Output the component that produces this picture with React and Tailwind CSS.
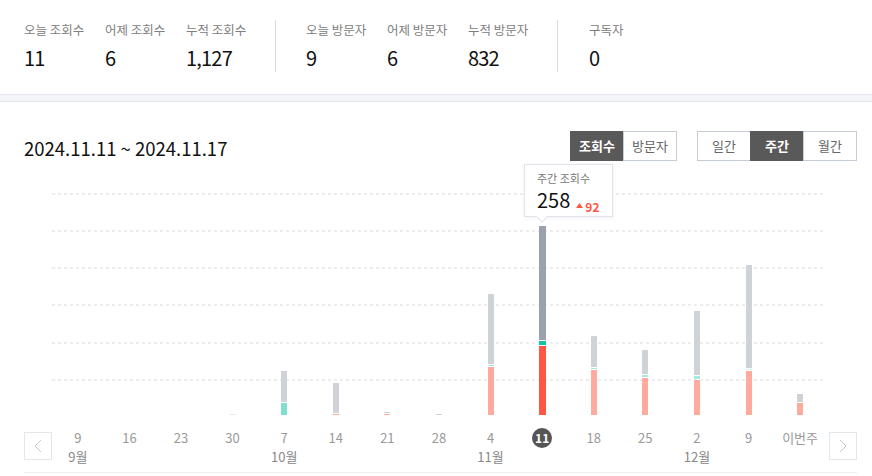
const font = { fontFamily: '"Noto Sans CJK KR", "Noto Sans", sans-serif' };

const viewStats = [
  { label: "오늘 조회수", value: "11" },
  { label: "어제 조회수", value: "6" },
  { label: "누적 조회수", value: "1,127" },
];
const visitStats = [
  { label: "오늘 방문자", value: "9" },
  { label: "어제 방문자", value: "6" },
  { label: "누적 방문자", value: "832" },
];

// weekly bars, segment heights in px: gray (top), teal, red (bottom)
const weeks = [
  { day: "9", month: "9월" },
  { day: "16" },
  { day: "23" },
  { day: "30", gray: 1, faint: true },
  { day: "7", month: "10월", gray: 31, teal: 12, tealColor: "bg-[#80dfcf]" },
  { day: "14", gray: 30, red: 1 },
  { day: "21", gray: 1, red: 1 },
  { day: "28", gray: 1 },
  { day: "4", month: "11월", gray: 70, teal: 1, red: 48 },
  { day: "11", gray: 114, teal: 4, red: 69, active: true },
  { day: "18", gray: 31, teal: 1, red: 45 },
  { day: "25", gray: 24, teal: 2, red: 37 },
  { day: "2", month: "12월", gray: 64, teal: 3, red: 35 },
  { day: "9", gray: 103, teal: 1, red: 44, tealColor: "bg-[#d4f5ef]" },
  { day: "이번주", gray: 8, red: 12 },
];

const gridTops = ["top-0", "top-[37px]", "top-[74px]", "top-[111px]", "top-[149px]", "top-[186px]"];

function Stat({ label, value }) {
  return (
    <div className="w-[81px] shrink-0">
      <div className="text-[12.5px] leading-[19px] text-[#808080] whitespace-nowrap">{label}</div>
      <div className="mt-[5px] text-[20px] leading-[28px] tracking-[-0.8px] text-[#111]">{value}</div>
    </div>
  );
}

function Bar({ w }) {
  if (!w.gray && !w.teal && !w.red) return null;
  return (
    <div className={`flex flex-col gap-px ${w.active ? "w-[7px]" : "w-[6px]"}`}>
      {w.gray ? (
        <div
          className={w.active ? "bg-[#9aa3ad]" : w.faint ? "bg-[#ececec]" : "bg-[#cfd3d7]"}
          style={{ height: w.gray }}
        />
      ) : null}
      {w.teal ? (
        <div
          className={w.active ? "bg-[#16c2a3]" : w.tealColor || "bg-[#a6e9de]"}
          style={{ height: w.teal }}
        />
      ) : null}
      {w.red ? (
        <div className={w.active ? "bg-[#ff5745]" : "bg-[#ffaa9e]"} style={{ height: w.red }} />
      ) : null}
    </div>
  );
}

function Arrow({ dir }) {
  return (
    <div className="w-7 h-7 border border-[#e4e6ea] flex items-center justify-center shrink-0">
      <svg width="8" height="14" viewBox="0 0 8 14" fill="none" stroke="#c8c8c8" strokeWidth="1">
        {dir === "left" ? <polyline points="7,1 1,7 7,13" /> : <polyline points="1,1 7,7 1,13" />}
      </svg>
    </div>
  );
}

export default function App() {
  return (
    <div className="w-[872px] h-[476px] bg-white overflow-hidden" style={font}>
      {/* summary */}
      <div className="h-[94px] px-6 pt-[20px] flex items-start">
        {viewStats.map((s) => (
          <Stat key={s.label} {...s} />
        ))}
        <div className="w-px h-[52px] bg-[#dedede] ml-[8px] mr-[30px]" />
        {visitStats.map((s) => (
          <Stat key={s.label} {...s} />
        ))}
        <div className="w-px h-[52px] bg-[#dedede] ml-[8px] mr-[31px]" />
        <Stat label="구독자" value="0" />
      </div>
      <div className="h-[8px] bg-[#f4f5f8] border-t border-b border-[#e4e7ed]" />

      {/* chart */}
      <div className="pl-6 pr-[15px]">
        <div className="mt-[29px] h-[30px] flex items-center">
          <h2 className="text-[18.5px] text-[#111] leading-none mt-[5px]">2024.11.11 ~ 2024.11.17</h2>
          <div className="ml-auto flex">
            <button className="w-[54px] h-[30px] border border-[#595959] bg-[#595959] text-white text-[13px] font-bold">
              조회수
            </button>
            <button className="-ml-px w-[54px] h-[30px] border border-[#c6ccd6] text-[#666] text-[13px]">
              방문자
            </button>
          </div>
          <div className="ml-5 flex">
            <button className="w-[54px] h-[30px] border border-[#c6ccd6] text-[#666] text-[13px]">일간</button>
            <button className="-ml-px w-[54px] h-[30px] border border-[#595959] bg-[#595959] text-white text-[13px] font-bold">
              주간
            </button>
            <button className="-ml-px w-[54px] h-[30px] border border-[#c6ccd6] text-[#666] text-[13px]">월간</button>
          </div>
        </div>

        <div className="relative mt-[32px] ml-[28px] w-[774px] h-[222px]">
          {gridTops.map((t) => (
            <div
              key={t}
              className={`absolute left-0 right-[2px] h-[2px] ${t} bg-[linear-gradient(to_right,#ededed_3px,transparent_3px)] bg-[length:6px_2px]`}
            />
          ))}
          <div className="relative flex h-full items-end">
            {weeks.map((w, i) => (
              <div key={i} className="flex-1 flex justify-center">
                <Bar w={w} />
              </div>
            ))}
          </div>
          {/* tooltip */}
          <div className="absolute left-[472px] top-[-29px] w-[89px] h-[53px] bg-white border border-[#e1e4ea] shadow-[0_1px_4px_rgba(0,0,0,0.06)] pl-[12px] pt-[6px]">
            <div className="text-[11px] leading-[15px] text-[#777]">주간 조회수</div>
            <div className="flex items-baseline gap-[6px] mt-[1px]">
              <span className="text-[20px] leading-[26px] text-[#111]">258</span>
              <span className="text-[12px] font-bold text-[#ff5745] flex items-center gap-[2px]">
                <svg width="7" height="5" viewBox="0 0 7 5" className="mb-[2px]">
                  <polygon points="3.5,0 7,5 0,5" fill="#ff5745" />
                </svg>
                92
              </span>
            </div>
            <div className="absolute left-[13px] bottom-[-5px] w-[8px] h-[8px] bg-white border-r border-b border-[#e1e4ea] rotate-45" />
          </div>
        </div>

        <div className="mt-[13px] flex items-start">
          <div className="mt-[4px]">
            <Arrow dir="left" />
          </div>
          <div className="w-[774px] flex">
            {weeks.map((w, i) => (
              <div key={i} className="flex-1 flex flex-col items-center">
                <div className="h-[20px] flex items-center justify-center">
                  {w.active ? (
                    <span className="w-[20px] h-[20px] rounded-full bg-[#555] text-white text-[12px] font-bold flex items-center justify-center">
                      {w.day}
                    </span>
                  ) : (
                    <span className="text-[13px] text-[#999] whitespace-nowrap">{w.day}</span>
                  )}
                </div>
                <div className="h-[17px] text-[13px] leading-[17px] text-[#888]">{w.month || ""}</div>
              </div>
            ))}
          </div>
          <div className="ml-auto mt-[4px]">
            <Arrow dir="right" />
          </div>
        </div>
        <div className="mt-[7px] border-t border-[#eeeeee]" />
      </div>
    </div>
  );
}
